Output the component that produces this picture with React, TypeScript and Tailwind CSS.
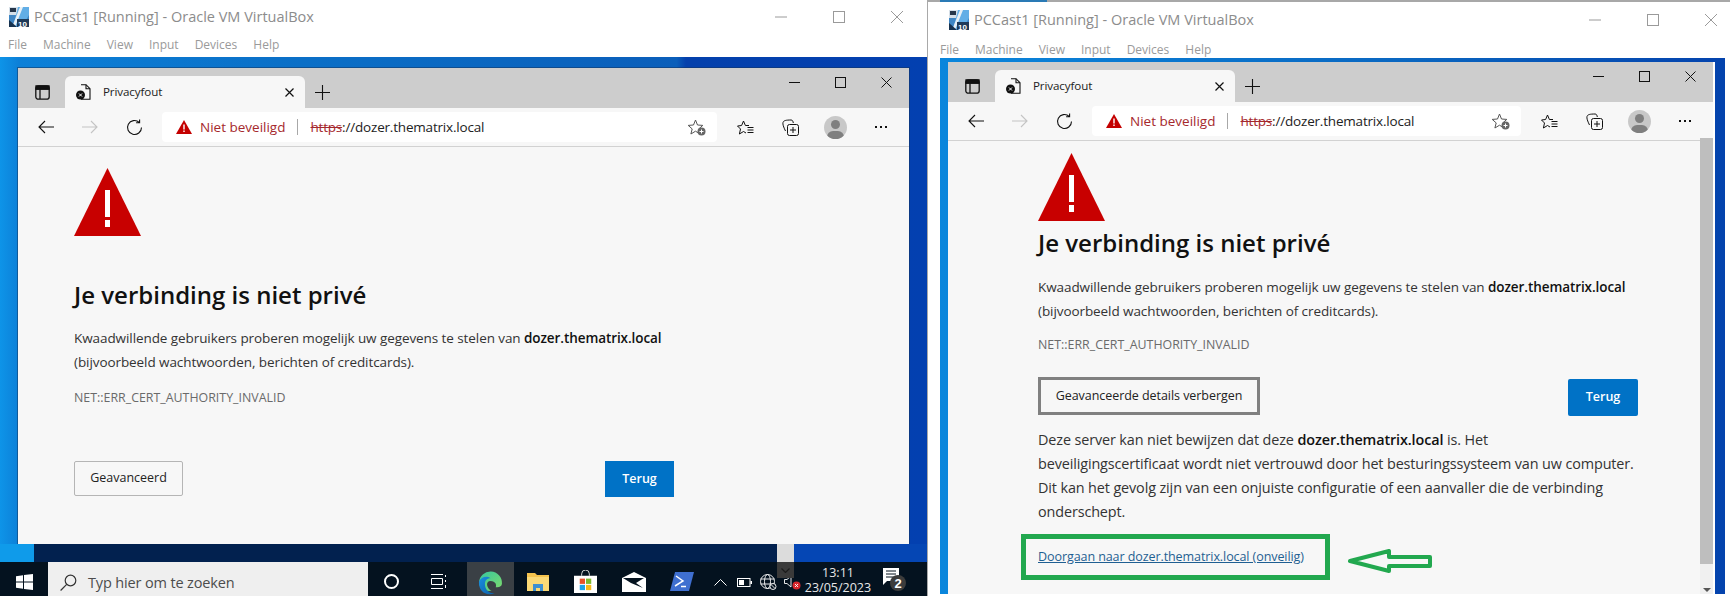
import React from 'react';

const font = { fontFamily: '"Open Sans", "Noto Sans", sans-serif' };

function VboxLogo() {
  return (
    <svg width="20" height="20" viewBox="0 0 20 20" className="shrink-0">
      <rect width="20" height="20" fill="#3f86c4" />
      <rect x="0" y="0" width="9" height="8" fill="#d5dfe8" />
      <rect x="1" y="1" width="6" height="4" fill="#26364a" />
      <path d="M9 0h11v8L13 20H4z" fill="#62aee6" />
      <path d="M11 0l3 0L6 20H3z" fill="#e8f0f6" />
      <path d="M0 13l8 7H0z" fill="#17324f" />
      <rect x="8" y="12" width="12" height="8" fill="#1f3a58" />
      <text x="9" y="19.5" fontSize="8" fontWeight="700" fill="#fff" fontFamily="Liberation Sans, sans-serif">10</text>
    </svg>
  );
}

function ThinControls({ stroke, gap, size }: { stroke: string; gap: string; size: number }) {
  return (
    <div className={`flex items-center ${gap}`}>
      <svg width={size} height={size} viewBox="0 0 12 12" fill="none" stroke={stroke} strokeWidth="1"><path d="M0 6h12" /></svg>
      <svg width={size} height={size} viewBox="0 0 12 12" fill="none" stroke={stroke} strokeWidth="1"><rect x="0.5" y="0.5" width="11" height="11" /></svg>
      <svg width={size} height={size} viewBox="0 0 12 12" fill="none" stroke={stroke} strokeWidth="1"><path d="M0 0l12 12M12 0L0 12" /></svg>
    </div>
  );
}

function VmHeader({ rowClass, logoClass, menuClass, controlsClass }: { rowClass: string; logoClass: string; menuClass: string; controlsClass: string }) {
  const menu = ['File', 'Machine', 'View', 'Input', 'Devices', 'Help'];
  return (
    <div className="bg-white">
      <div className={`flex items-center justify-between ${rowClass}`}>
        <div className={`flex items-center gap-[5px] ${logoClass}`}>
          <VboxLogo />
          <span className="text-[14.5px] text-[#8c8c8c] whitespace-nowrap">PCCast1 [Running] - Oracle VM VirtualBox</span>
        </div>
        <div className={controlsClass}>
          <ThinControls stroke="#9a9a9a" gap="gap-[46px]" size={12} />
        </div>
      </div>
      <div className={`flex gap-[16px] text-[12px] text-[#9a9a9a] items-center ${menuClass}`}>
        {menu.map((m) => (
          <span key={m}>{m}</span>
        ))}
      </div>
    </div>
  );
}

function BrowserChrome() {
  return (
    <>
      <div className="flex h-[40px] bg-[#cdcdcd]">
        <div className="flex w-[47px] shrink-0 items-center justify-center pt-[8px] pl-[1px]">
          <svg width="15" height="15" viewBox="0 0 15 15" fill="none" stroke="#111" strokeWidth="1.3">
            <rect x="0.8" y="0.8" width="13.4" height="13.4" rx="2.5" />
            <path d="M0.8 4h13.4M5 4v10" />
            <path d="M1 1h13v3H1z" fill="#111" />
          </svg>
        </div>
        <div className="mt-[8px] flex w-[240px] shrink-0 items-center rounded-t-[6px] bg-[#f7f7f7] pl-[11px] pr-[11px]">
          <svg width="15" height="16" viewBox="0 0 15 16" fill="none" className="shrink-0">
            <path d="M5 0.7h5l4 4v10.600H5" stroke="#111" strokeWidth="1.1" />
            <path d="M10 0.7v4h4" stroke="#111" strokeWidth="1.1" />
            <circle cx="4.5" cy="11" r="4.5" fill="#111" />
            <path d="M3 9.5l3 3M6 9.5l-3 3" stroke="#fff" strokeWidth="1" />
          </svg>
          <span className="ml-[12px] text-[11.6px] text-[#222] tracking-[-0.1px]">Privacyfout</span>
          <svg className="ml-auto" width="9" height="9" viewBox="0 0 9 9" stroke="#111" strokeWidth="1.2"><path d="M0.5 0.5l8 8M8.5 0.5l-8 8" /></svg>
        </div>
        <div className="flex w-[34px] shrink-0 items-center justify-center pt-[8px]">
          <svg width="15" height="15" viewBox="0 0 15 15" stroke="#111" strokeWidth="1.1"><path d="M7.5 0v15M0 7.5h15" /></svg>
        </div>
        <div className="flex-1" />
        <div className="flex h-[28px] shrink-0 items-center">
          <div className="flex w-[46px] justify-center"><svg width="11" height="11" viewBox="0 0 11 11" stroke="#111" strokeWidth="1"><path d="M0 5.5h11" /></svg></div>
          <div className="flex w-[46px] justify-center"><svg width="11" height="11" viewBox="0 0 11 11" fill="none" stroke="#111" strokeWidth="1"><rect x="0.5" y="0.5" width="10" height="10" /></svg></div>
          <div className="flex w-[46px] justify-center"><svg width="11" height="11" viewBox="0 0 11 11" stroke="#111" strokeWidth="1"><path d="M0.5 0.5l10 10M10.5 0.5l-10 10" /></svg></div>
        </div>
      </div>
      <div className="flex h-[39px] items-center border-b border-[#d2d2d2] bg-[#f7f7f7] pl-[6px]">
        <div className="flex w-[44px] justify-center">
          <svg width="16" height="14" viewBox="0 0 16 14" fill="none" stroke="#111" strokeWidth="1.1"><path d="M16 7H1M7 1L1 7l6 6" /></svg>
        </div>
        <div className="flex w-[44px] justify-center">
          <svg width="16" height="14" viewBox="0 0 16 14" fill="none" stroke="#c4c4c4" strokeWidth="1.1"><path d="M0 7h15M9 1l6 6-6 6" /></svg>
        </div>
        <div className="flex w-[44px] justify-center">
          <svg width="17" height="17" viewBox="0 0 17 17" fill="none" stroke="#111" strokeWidth="1.1"><path d="M15.5 8.5a7 7 0 1 1-2.3-5.2M13.6 0.4v3.4h-3.5" /></svg>
        </div>
        <div className="ml-[6px] flex h-[30px] min-w-0 flex-1 items-center rounded-[4px] bg-white pl-[14px] pr-[11px]">
          <svg width="16" height="14" viewBox="0 0 16 14" className="shrink-0"><path d="M8 0l8 14H0z" fill="#c40000" /><path d="M7.3 4.5h1.4v5H7.3zM7.3 10.5h1.4v1.6H7.3z" fill="#fff" /></svg>
          <span className="ml-[8px] text-[13.5px] text-[#a5282c] whitespace-nowrap">Niet beveiligd</span>
          <span className="mx-[12px] h-[16px] w-px shrink-0 bg-[#a8a8a8]" />
          <span className="text-[13.5px] text-[#222] tracking-[-0.19px] whitespace-nowrap"><span className="text-[#a5282c] line-through">https</span>://dozer.thematrix.local</span>
          <svg className="ml-auto shrink-0" width="18" height="17" viewBox="0 0 18 17" fill="none">
            <path d="M7.5 1l2 5 5.3.4-4 3.5 1.3 5.1-4.600-2.800-4.600 2.800 1.300-5.100-4-3.500 5.300-.4z" stroke="#555" strokeWidth="1" />
            <circle cx="13.5" cy="12.5" r="4" fill="#666" />
            <path d="M13.5 10.5v4M11.5 12.5h4" stroke="#fff" strokeWidth="1" />
          </svg>
        </div>
        <div className="flex w-[192px] shrink-0 items-center pl-[5px]">
          <div className="flex w-[46px] justify-center">
            <svg width="17" height="15" viewBox="0 0 17 15" fill="none" stroke="#111" strokeWidth="1">
              <path d="M12 5.500H8.400L6.500 1 4.600 5.500 0.500 6 3.500 9 2.400 14l4.100-2.500L9 13" />
              <path d="M10.500 7.500H16.500M10.500 10H16.500M10.500 12.500H16.500" />
            </svg>
          </div>
          <div className="flex w-[44px] justify-center">
            <svg width="17" height="17" viewBox="0 0 17 17" fill="none" stroke="#111" strokeWidth="1"><path d="M3.500 12C1.500 8 .5 5 1 3.500 1.500 1.500 4 1 9 1c1.500 0 2 1 2.300 3" /><rect x="5.500" y="5.500" width="11" height="11" rx="2" /><path d="M11 8v6M8 11h6" /></svg>
          </div>
          <div className="flex w-[46px] justify-center">
            <div className="relative h-[23px] w-[23px] overflow-hidden rounded-full bg-[#c8c8c8]">
              <div className="absolute left-[7px] top-[4px] h-[9px] w-[9px] rounded-full bg-[#7f7f7f]" />
              <div className="absolute left-[3px] top-[15px] h-[12px] w-[17px] rounded-full bg-[#7f7f7f]" />
            </div>
          </div>
          <div className="flex w-[46px] items-center justify-center gap-[3px]">
            <span className="h-[2px] w-[2px] bg-[#111]" />
            <span className="h-[2px] w-[2px] bg-[#111]" />
            <span className="h-[2px] w-[2px] bg-[#111]" />
          </div>
        </div>
      </div>
    </>
  );
}

function WarningTriangle() {
  return (
    <svg width="67" height="68" viewBox="0 0 67 68" className="block">
      <path d="M33.5 0L67 68H0z" fill="#c80000" />
      <path d="M31 22h5v27h-5zM31 52h5v7h-5z" fill="#fff" />
    </svg>
  );
}

function Intro({ headingClass, paraClass, netClass }: { headingClass: string; paraClass: string; netClass: string }) {
  return (
    <>
      <h1 className={`text-[24px] leading-[32px] font-semibold text-[#111] ${headingClass}`}>Je verbinding is niet privé</h1>
      <p className={`text-[13.5px] leading-[24px] text-[#333] tracking-[-0.08px] ${paraClass}`}>
        Kwaadwillende gebruikers proberen mogelijk uw gegevens te stelen van <b className="font-semibold text-[#111]">dozer.thematrix.local</b>
        <br />
        (bijvoorbeeld wachtwoorden, berichten of creditcards).
      </p>
      <div className={`text-[12.4px] leading-[20px] text-[#6a6a6a] ${netClass}`}>NET::ERR_CERT_AUTHORITY_INVALID</div>
    </>
  );
}

function Taskbar() {
  return (
    <div className="relative flex h-[34px] items-start overflow-hidden bg-[#04121f]">
      <div className="flex h-[34px] w-[48px] shrink-0 justify-center pt-[12px]">
        <svg width="17" height="16" viewBox="0 0 17 16" fill="#fff"><path d="M0 2.300l7-1v6.200H0zM8 1.100l9-1.100v7.500H8zM0 8.500h7v6.200l-7-1zM8 8.500h9V16l-9-1.100z" /></svg>
      </div>
      <div className="flex h-[34px] w-[320px] shrink-0 items-center bg-[#efefef] pl-[12px] pt-[7px]">
        <svg width="17" height="17" viewBox="0 0 17 17" fill="none" stroke="#333" strokeWidth="1.2"><circle cx="10.5" cy="6.500" r="5.300" /><path d="M6.700 10.300L.6 16.500" /></svg>
        <span className="ml-[11px] text-[14.5px] text-[#4c4c4c] tracking-[-0.15px] whitespace-nowrap">Typ hier om te zoeken</span>
      </div>
      <div className="flex h-[34px] w-[47px] shrink-0 justify-center pt-[12px]">
        <div className="h-[15px] w-[15px] rounded-full border-[2px] border-white" />
      </div>
      <div className="flex h-[34px] w-[48px] shrink-0 justify-center pt-[12px]">
        <svg width="16" height="15" viewBox="0 0 16 15" fill="none" stroke="#fff" strokeWidth="1"><path d="M0 .5h12M0 14.500h12M.5 4.500h11v6H.5zM14.500 1v2M14.500 6v2M14.500 11v3" /></svg>
      </div>
      <div className="ml-[4px] flex h-[34px] w-[47px] shrink-0 justify-center bg-[#3a4045] pt-[8px]">
        <svg width="25" height="25" viewBox="0 0 24 24">
          <defs>
            <linearGradient id="edgeA" x1="0" y1="0" x2="1" y2="1"><stop offset="0" stopColor="#36c5a0" /><stop offset="1" stopColor="#7fdc6a" /></linearGradient>
            <linearGradient id="edgeB" x1="0" y1="0" x2="1" y2="1"><stop offset="0" stopColor="#1a8fe0" /><stop offset="1" stopColor="#0c5ea8" /></linearGradient>
          </defs>
          <path d="M1 12a11 11 0 0 1 22 1c0 3-3 4-6 3.500 1-2 0-6-5-6-5 0-4 7 1 9.500-7 1-12-3-12-8z" fill="url(#edgeA)" />
          <path d="M1 11c2-4 7-6 11-3-5 0-6 4-5 8s5 7 9 6c-8 4-16-2-15-11z" fill="url(#edgeB)" />
        </svg>
      </div>
      <div className="flex h-[34px] w-[48px] shrink-0 justify-center pt-[10px]">
        <svg width="22" height="20" viewBox="0 0 22 20"><path d="M0 1h8l2 2h12v15H0z" fill="#f5c34e" /><path d="M0 5h22v14H0z" fill="#fbd976" /><path d="M6 12h10v7h-3v-3H9v3H6z" fill="#3d8fd1" /></svg>
      </div>
      <div className="flex h-[34px] w-[47px] shrink-0 justify-center pt-[8px]">
        <svg width="23" height="23" viewBox="0 0 24 24" fill="none">
          <path d="M8 6V4a4 4 0 0 1 8 0v2" stroke="#ddd" strokeWidth="1" />
          <path d="M0 6h24v18H0z" fill="#fff" />
          <path d="M6 9h5.500v5.500H6z" fill="#e8512a" /><path d="M12.500 9H18v5.500h-5.500z" fill="#7cb82f" />
          <path d="M6 15.500h5.500V21H6z" fill="#1ea2e8" /><path d="M12.500 15.500H18V21h-5.500z" fill="#f6b81a" />
        </svg>
      </div>
      <div className="flex h-[34px] w-[49px] shrink-0 justify-center pt-[10px]">
        <svg width="24" height="20" viewBox="0 0 24 20"><path d="M12 0l12 6v14H0V6z" fill="#fff" /><path d="M1 6h21l-8 5 7 5-12-5z" fill="#04121f" /></svg>
      </div>
      <div className="flex h-[34px] w-[48px] shrink-0 justify-center pt-[10px]">
        <svg width="24" height="19" viewBox="0 0 24 19"><path d="M5 0h19l-5 19H0z" fill="#3f6fd0" /><path d="M6 4l7 5-8 5" fill="none" stroke="#fff" strokeWidth="1.5" /><path d="M11 14.500h5" stroke="#fff" strokeWidth="1.5" /></svg>
      </div>
      <div className="ml-[2px] flex h-[34px] w-[24px] shrink-0 justify-center pt-[17px]">
        <svg width="13" height="7" viewBox="0 0 13 7" fill="none" stroke="#fff" strokeWidth="1"><path d="M.5 6.500l6-6 6 6" /></svg>
      </div>
      <div className="flex h-[34px] w-[24px] shrink-0 justify-center pt-[16px]">
        <svg width="15" height="9" viewBox="0 0 15 9"><rect x=".5" y=".5" width="12.5" height="8" fill="none" stroke="#fff" /><rect x="2" y="2" width="5" height="5" fill="#fff" /><rect x="13.500" y="3" width="1.5" height="3" fill="#fff" /></svg>
      </div>
      <div className="flex h-[34px] w-[24px] shrink-0 justify-center pt-[12px]">
        <svg width="17" height="16" viewBox="0 0 17 16" fill="none" stroke="#fff" strokeWidth=".9"><circle cx="7.5" cy="7.5" r="7" /><ellipse cx="7.5" cy="7.5" rx="3" ry="7" /><path d="M.5 5h14M.5 10h14" /><circle cx="13" cy="12.5" r="3" fill="#04121f" /><path d="M11 10.500l4 4" /></svg>
      </div>
      <div className="flex h-[34px] w-[24px] shrink-0 justify-center pt-[13px]">
        <svg width="17" height="15" viewBox="0 0 17 15" fill="none">
          <path d="M.5 4.500h2.500L7 1v11L3 8.500H.5z" stroke="#fff" strokeWidth=".9" />
          <circle cx="12.5" cy="10.5" r="4" fill="#d8262c" />
          <path d="M11 9l3 3M14 9l-3 3" stroke="#fff" strokeWidth=".9" />
        </svg>
      </div>
      <div className="flex h-[34px] w-[68px] shrink-0 flex-col items-center pt-[3px] text-[12.5px] leading-[15px] text-[#e8e8e8] whitespace-nowrap">
        <span>13:11</span>
        <span>23/05/2023</span>
      </div>
      <div className="flex h-[34px] w-[46px] shrink-0 justify-center pt-[6px]">
        <svg width="24" height="28" viewBox="0 0 24 28">
          <path d="M0 0h16v13H4l-4 4z" fill="#fff" />
          <path d="M3 3h10M3 6h10M3 9h10" stroke="#04121f" strokeWidth="1" />
          <circle cx="15" cy="15" r="8" fill="#3c3c3c" />
          <text x="15" y="20" textAnchor="middle" fontSize="13" fontWeight="700" fill="#fff" fontFamily="Liberation Sans, sans-serif">2</text>
        </svg>
      </div>
      <div className="absolute left-[777px] top-0 flex h-[16px] w-[17px] items-center justify-center bg-[#3a3a3a]">
        <svg width="9" height="5" viewBox="0 0 9 5" fill="none" stroke="#1c1c1c" strokeWidth="1.2"><path d="M.5.5l4 4 4-4" /></svg>
      </div>
    </div>
  );
}

function LeftShot() {
  return (
    <div className="flex h-[596px] w-[928px] shrink-0 flex-col border-r border-[#a9a9a9]">
      <VmHeader rowClass="h-[33px]" logoClass="pl-[9px]" menuClass="h-[24px] pl-[8px]" controlsClass="pr-[24px]" />
      <div className="flex flex-1 flex-col bg-[linear-gradient(90deg,#0e94e8_0%,#0c80d8_2%,#0a70c8_30%,#0a5eba_73%,#0440ac_74%,#0340b0_100%)]">
        <div className="flex-1 pl-[18px] pr-[18px] pt-[11px]">
          <div className="flex h-[476px] flex-col bg-[#f7f7f7] shadow-[0_0_0_1px_rgba(20,50,90,0.5)]">
            <BrowserChrome />
            <div className="mx-[56px] w-[600px] pt-[21px]">
              <WarningTriangle />
              <Intro headingClass="mt-[43px]" paraClass="mt-[15px]" netClass="mt-[14px]" />
              <div className="mt-[53px] flex items-start justify-between">
                <button className="h-[35px] w-[109px] rounded-[2px] border border-[#b5b5b5] bg-[#f7f7f7] text-[12.5px] text-[#222]">Geavanceerd</button>
                <button className="h-[36px] w-[69px] bg-[#0072c6] text-[12.5px] font-semibold text-white">Terug</button>
              </div>
            </div>
          </div>
        </div>
        <div className="flex h-[18px]">
          <div className="w-[34px] bg-[#0f9bea]" />
          <div className="flex-1 bg-[#02214f]" />
          <div className="w-[17px] bg-[#dcdcdc]" />
          <div className="w-[133px] bg-[#0546b4]" />
        </div>
        <Taskbar />
      </div>
    </div>
  );
}

function RightShot() {
  return (
    <div className="flex h-[596px] flex-1 flex-col bg-white">
      <div className="flex h-[2px] bg-[#a8a8a8]">
        <div className="ml-[12px] w-[107px] bg-[#2a7ab5]" />
      </div>
      <VmHeader rowClass="h-[36px]" logoClass="pl-[21px]" menuClass="h-[20px] pt-[4px] pl-[12px]" controlsClass="pr-[13px]" />
      <div className="ml-[12px] mr-[5px] flex h-[536px] flex-col bg-[linear-gradient(90deg,#0a86dc_0%,#0a66c0_60%,#0443ad_100%)] pl-[8px] pr-[10px] pt-[4px]">
        <div className="flex h-[532px] flex-col border-r-[2px] border-white bg-[#f7f7f7]">
          <BrowserChrome />
          <div className="flex min-h-0 flex-1">
            <div className="min-w-0 flex-1 pl-[90px]">
              <div className="w-[600px] pt-[12px]">
                <WarningTriangle />
                <Intro headingClass="mt-[6px]" paraClass="mt-[16px]" netClass="mt-[12px]" />
                <div className="mt-[22px] flex items-start justify-between">
                  <button className="h-[38px] w-[222px] border-[3px] border-[#808080] bg-[#f7f7f7] text-[12.5px] text-[#222] tracking-[-0.05px]">Geavanceerde details verbergen</button>
                  <button className="mt-[2px] h-[37px] w-[70px] rounded-[2px] bg-[#0072c6] text-[12.5px] font-semibold text-white">Terug</button>
                </div>
                <p className="mt-[12px] text-[14.4px] leading-[24px] text-[#333] tracking-[-0.12px] whitespace-nowrap">
                  Deze server kan niet bewijzen dat deze <b className="font-semibold text-[#111]">dozer.thematrix.local</b> is. Het
                  <br />
                  beveiligingscertificaat wordt niet vertrouwd door het besturingssysteem van uw computer.
                  <br />
                  Dit kan het gevolg zijn van een onjuiste configuratie of een aanvaller die de verbinding
                  <br />
                  onderschept.
                </p>
                <div className="-ml-[17px] mt-[10px] flex items-center">
                  <div className="flex h-[46px] w-[309px] shrink-0 items-center border-[5px] border-[#22a84f] pl-[12px]">
                    <a className="text-[12.55px] text-[#1f5f92] underline tracking-[-0.1px] whitespace-nowrap">Doorgaan naar dozer.thematrix.local (onveilig)</a>
                  </div>
                  <svg className="ml-[18px] mt-[8px] shrink-0" width="84" height="24" viewBox="0 0 84 24" fill="none" stroke="#22a84f" strokeWidth="4" strokeLinejoin="round">
                    <path d="M2 12L41 2v6h41v9H41v5z" />
                  </svg>
                </div>
              </div>
            </div>
            <div className="-mt-[3px] flex w-[13px] shrink-0 flex-col bg-[#f0f0f0]">
              <div className="h-[426px] bg-[#bebebe]" />
              <div className="flex flex-1 items-end justify-center pb-[2px]">
                <div className="h-0 w-0 border-x-[4px] border-t-[4px] border-x-transparent border-t-[#555]" />
              </div>
            </div>
          </div>
        </div>
      </div>
    </div>
  );
}

export default function App() {
  return (
    <div className="flex h-[596px] w-[1730px] overflow-hidden bg-white" style={font}>
      <LeftShot />
      <RightShot />
    </div>
  );
}
